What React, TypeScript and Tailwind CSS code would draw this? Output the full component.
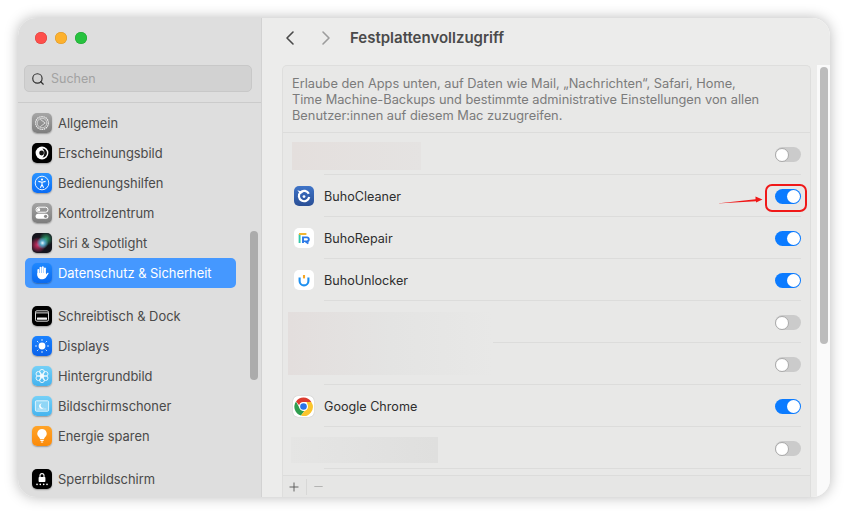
import React from 'react';
import { ChevronLeft, ChevronRight, Search, Plus, Minus } from 'lucide-react';

const Tile: React.FC<{ className: string; children?: React.ReactNode }> = ({ className, children }) => (
  <div className={`h-5 w-5 shrink-0 rounded-[5px] flex items-center justify-center shadow-[0_1px_1.5px_rgba(0,0,0,0.3)] ${className}`}>
    {children}
  </div>
);

const icons: { [key: string]: React.ReactNode } = {
  general: (
    <Tile className="bg-gradient-to-b from-[#a6a6a6] to-[#7e7e7e]">
      <svg viewBox="0 0 20 20" className="h-5 w-5" fill="none" stroke="#e8e8e8">
        <circle cx="10" cy="10" r="6.4" strokeWidth="1.2" strokeDasharray="1.6 0.6" />
        <circle cx="10" cy="10" r="4.8" strokeWidth="0.7" />
        <path d="M8.2 6.3 13.2 10l-5 3.7" strokeWidth="0.8" />
      </svg>
    </Tile>
  ),
  appearance: (
    <Tile className="bg-black">
      <svg viewBox="0 0 20 20" className="h-5 w-5">
        <circle cx="10" cy="10" r="6.4" fill="#fff" />
        <path d="M10.4 5.4a4.6 4.6 0 0 1 0 9.2 6.4 6.4 0 0 0 0-9.2z" fill="#111" />
        <circle cx="9.6" cy="10" r="2.4" fill="#111" />
      </svg>
    </Tile>
  ),
  access: (
    <Tile className="bg-gradient-to-b from-[#2a93ff] to-[#0a6cf5]">
      <svg viewBox="0 0 20 20" className="h-5 w-5" fill="none" stroke="#fff">
        <circle cx="10" cy="10" r="6.8" strokeWidth="0.9" />
        <circle cx="10" cy="6.6" r="1.1" fill="#fff" stroke="none" />
        <path d="M6.4 8.4 10 9.2l3.6-.8M10 9.2v2.4l-1.6 3.2M10 11.6l1.6 3.2" strokeWidth="1.1" />
      </svg>
    </Tile>
  ),
  control: (
    <Tile className="bg-gradient-to-b from-[#a4a4a4] to-[#7d7d7d]">
      <svg viewBox="0 0 20 20" className="h-5 w-5">
        <rect x="4" y="4.2" width="12" height="5" rx="2.5" fill="none" stroke="#fff" strokeWidth="1" />
        <circle cx="6.6" cy="6.7" r="1.6" fill="#fff" />
        <rect x="3.6" y="10.8" width="12.8" height="5" rx="2.5" fill="#fff" />
        <circle cx="13.6" cy="13.3" r="1.6" fill="#8a8a8a" />
      </svg>
    </Tile>
  ),
  siri: (
    <Tile className="bg-[#14141c]">
      <svg viewBox="0 0 20 20" className="h-5 w-5 rounded-[5px]">
        <defs>
          <radialGradient id="s1"><stop offset="0" stopColor="#e9f7ff" /><stop offset="0.4" stopColor="#55a8c8" /><stop offset="1" stopColor="#55a8c8" stopOpacity="0" /></radialGradient>
          <radialGradient id="s2"><stop offset="0" stopColor="#e0306a" /><stop offset="1" stopColor="#e0306a" stopOpacity="0" /></radialGradient>
          <radialGradient id="s3"><stop offset="0" stopColor="#2ea56e" /><stop offset="1" stopColor="#2ea56e" stopOpacity="0" /></radialGradient>
        </defs>
        <circle cx="6" cy="12" r="8" fill="url(#s2)" />
        <circle cx="14" cy="6" r="7" fill="url(#s3)" />
        <circle cx="10.5" cy="10" r="6" fill="url(#s1)" />
      </svg>
    </Tile>
  ),
  privacy: (
    <Tile className="bg-gradient-to-b from-[#1e88ff] to-[#0a6af0]">
      <svg viewBox="0 0 20 20" className="h-5 w-5" fill="#fff">
        <rect x="5.4" y="6" width="1.9" height="7" rx="0.95" />
        <rect x="7.6" y="3.8" width="1.9" height="8" rx="0.95" />
        <rect x="9.8" y="3.2" width="1.9" height="8" rx="0.95" />
        <rect x="12" y="4.4" width="1.9" height="8" rx="0.95" />
        <path d="M5.4 10h8.5v1.6l1.4-1.7c.7-.7 1.6.1 1.1.9l-2.1 3.3c-.8 1.3-1.9 2.2-3.6 2.2-3 0-5.3-1.4-5.3-4.4z" />
      </svg>
    </Tile>
  ),
  dock: (
    <Tile className="bg-black">
      <svg viewBox="0 0 20 20" className="h-5 w-5">
        <rect x="3.5" y="4.8" width="13" height="10.4" rx="1.4" fill="none" stroke="#d8d8d8" strokeWidth="1" />
        <rect x="4" y="6" width="12" height="1.6" fill="#888" />
        <rect x="5" y="11.4" width="10" height="2.4" rx="0.5" fill="#f2f2f2" />
      </svg>
    </Tile>
  ),
  displays: (
    <Tile className="bg-gradient-to-b from-[#1b82ff] to-[#0b62ea]">
      <svg viewBox="0 0 20 20" className="h-5 w-5" fill="none" stroke="#fff">
        <circle cx="10" cy="10" r="3.4" fill="#fff" stroke="none" />
        <path d="M10 3.2v1.6M10 15.2v1.6M3.2 10h1.6M15.2 10h1.6M5.2 5.2l1.1 1.1M13.7 13.7l1.1 1.1M14.8 5.2l-1.1 1.1M6.3 13.7l-1.1 1.1" strokeWidth="1" />
      </svg>
    </Tile>
  ),
  wallpaper: (
    <Tile className="bg-gradient-to-b from-[#75d0f7] to-[#43b2ee]">
      <svg viewBox="0 0 20 20" className="h-5 w-5" fill="none" stroke="#fff" strokeWidth="0.9" opacity="0.95">
        <circle cx="10" cy="5.8" r="2.4" />
        <circle cx="10" cy="14.2" r="2.4" />
        <circle cx="6.4" cy="7.9" r="2.4" />
        <circle cx="13.6" cy="7.9" r="2.4" />
        <circle cx="6.4" cy="12.1" r="2.4" />
        <circle cx="13.6" cy="12.1" r="2.4" />
        <circle cx="10" cy="10" r="1.6" fill="#fff" />
      </svg>
    </Tile>
  ),
  saver: (
    <Tile className="bg-gradient-to-b from-[#75d0f7] to-[#45b4ef]">
      <svg viewBox="0 0 20 20" className="h-5 w-5">
        <rect x="3.4" y="4.8" width="13.2" height="10.4" rx="1" fill="#8fd6f6" stroke="#e9f8ff" strokeWidth="0.9" />
        <path d="M9.8 7.6a2.6 2.6 0 1 0 2 4 2.2 2.2 0 0 1-2-4z" fill="#fff" />
        <path d="M5.6 13h8.8" stroke="#fff" strokeWidth="0.7" opacity="0.7" />
      </svg>
    </Tile>
  ),
  energy: (
    <Tile className="bg-gradient-to-b from-[#ffa428] to-[#fb8a06]">
      <svg viewBox="0 0 20 20" className="h-5 w-5" fill="#fff">
        <path d="M10 3a4.7 4.7 0 0 0-3 8.3c.7.6.9 1.2 1 2h4c.1-.8.3-1.4 1-2A4.7 4.7 0 0 0 10 3z" />
        <rect x="8.2" y="14" width="3.6" height="1.1" rx="0.5" />
        <rect x="8.8" y="15.6" width="2.4" height="1" rx="0.5" />
      </svg>
    </Tile>
  ),
  lock: (
    <Tile className="bg-black">
      <svg viewBox="0 0 20 20" className="h-5 w-5" fill="#fff">
        <path d="M8 8V6.6a2 2 0 0 1 4 0V8" fill="none" stroke="#fff" strokeWidth="1.1" />
        <rect x="6.6" y="8" width="6.8" height="5" rx="0.8" />
        <circle cx="5" cy="15.4" r="0.8" />
        <circle cx="8.3" cy="15.4" r="0.8" />
        <circle cx="11.7" cy="15.4" r="0.8" />
        <circle cx="15" cy="15.4" r="0.8" />
      </svg>
    </Tile>
  ),
};

const Item: React.FC<{ icon: string; label: string; active?: boolean; mt?: string }> = ({ icon, label, active, mt }) => (
  <div className={`mr-[25px] flex h-[30px] items-center gap-[6px] rounded-[5px] pl-[7px] text-[12.9px] ${active ? 'bg-[#4598ff] text-white' : 'text-[#4a4a4a]'} ${mt || ''}`}>
    {icons[icon]}
    <span className="pt-[2px]">{label}</span>
  </div>
);

const Toggle: React.FC<{ on?: boolean }> = ({ on }) =>
  on ? (
    <div className="flex h-[15px] w-[26px] shrink-0 items-center justify-end rounded-full bg-[#0b7bff] pr-px">
      <div className="h-[13px] w-[13px] rounded-full bg-white" />
    </div>
  ) : (
    <div className="flex h-[15px] w-[26px] shrink-0 items-center rounded-full bg-[#cbcbcb]">
      <div className="h-[14px] w-[14px] rounded-full border border-[#a9a9a9] bg-white" />
    </div>
  );

const BuhoCleaner = () => (
  <div className="h-5 w-5 rounded-[5px] bg-gradient-to-b from-[#3f74c8] to-[#2a4f96]">
    <svg viewBox="0 0 20 20" className="h-5 w-5" fill="none">
      <path d="M14.8 7.8A5.2 5.2 0 1 0 15.2 11" stroke="#fff" strokeWidth="2.2" />
      <path d="M3.4 4.2 9.4 6 6.4 8.2z" fill="#fff" />
      <circle cx="10" cy="10.6" r="1.4" fill="#fff" />
    </svg>
  </div>
);

const BuhoRepair = () => (
  <div className="h-5 w-5 rounded-[5px] bg-white">
    <svg viewBox="0 0 20 20" className="h-5 w-5" fill="none" strokeWidth="1.9">
      <path d="M5.6 15V6" stroke="#2ec6a8" />
      <path d="M5 6h7.4" stroke="#f2b632" />
      <path d="M9 15V9.4h3.6a2 2 0 0 1 .4 4h-1.6l3 2.2" stroke="#2a78e8" />
    </svg>
  </div>
);

const BuhoUnlocker = () => (
  <div className="h-5 w-5 rounded-[5px] bg-white">
    <svg viewBox="0 0 20 20" className="h-5 w-5" fill="none" strokeWidth="2.1">
      <path d="M5.6 7.5V11a4.4 4.4 0 0 0 8.8 0V7.5" stroke="#1e90f0" />
      <path d="M10 5v3.4" stroke="#f5a623" />
    </svg>
  </div>
);

const Chrome = () => (
  <div className="h-[21px] w-[21px] rounded-[5px] bg-white shadow-[0_0_1px_rgba(0,0,0,0.3)]">
    <svg viewBox="0 0 21 21" className="h-[21px] w-[21px]">
      <path d="M10.5 1.5a9 9 0 0 1 7.8 4.5h-7.8a4.5 4.5 0 0 0-4.3 3.2L3 5.6A9 9 0 0 1 10.5 1.5z" fill="#dc3b2e" />
      <path d="M3 5.6l3.8 6.9a4.5 4.5 0 0 0 4.6 2.4L8 19.5A9 9 0 0 1 3 5.6z" fill="#2f9e4f" />
      <path d="M18.3 6A9 9 0 0 1 8 19.5l3.4-4.6a4.5 4.5 0 0 0 3-6.4 4 4 0 0 0-1-2.5z" fill="#fbc52e" />
      <circle cx="10.5" cy="10.5" r="4.3" fill="#fff" />
      <circle cx="10.5" cy="10.5" r="3.3" fill="#2a73e8" />
    </svg>
  </div>
);

const AppRow: React.FC<{ icon: React.ReactNode; name: string }> = ({ icon, name }) => (
  <div className="flex h-[42px] items-center pr-[9px]">
    <div className="flex w-[41px] shrink-0 justify-center">{icon}</div>
    <div className="flex h-full flex-1 items-center justify-between border-b border-[#dcdcdb] pt-px text-[12.6px] text-[#2e2e2e]">
      <span className="pt-[2px]">{name}</span>
      <Toggle on />
    </div>
  </div>
);

const BlurRow: React.FC<{ blob?: React.ReactNode; line?: string }> = ({ blob, line }) => (
  <div className="relative flex h-[42px] items-center pr-[9px]">
    <div className={`flex h-full flex-1 items-center justify-end border-b border-[#dcdcdb] pt-[2px] ${line || 'ml-[41px]'}`}>
      <Toggle />
    </div>
    {blob}
  </div>
);

export default function App() {
  return (
    <div className="h-[515px] w-[848px] bg-white p-[18px]" style={{ fontFamily: 'Inter, "Liberation Sans", sans-serif' }}>
      <div className="relative flex h-[479px] w-[812px] overflow-hidden rounded-[18px] shadow-[0_0_14px_rgba(0,0,0,0.28)]">
        {/* Sidebar */}
        <div className="flex w-[244px] shrink-0 flex-col border-r border-[#d2d2d2] bg-[#dedede]">
          <div className="flex h-[47px] items-center gap-[8px] pb-[7px] pl-[17px]">
            <div className="h-3 w-3 rounded-full bg-[#fe4f4b] shadow-[inset_0_0_0_0.5px_#d8403c]" />
            <div className="h-3 w-3 rounded-full bg-[#fdb12d] shadow-[inset_0_0_0_0.5px_#d8962a]" />
            <div className="h-3 w-3 rounded-full bg-[#27c23f] shadow-[inset_0_0_0_0.5px_#1fa232]" />
          </div>
          <div className="ml-[6px] mr-[9px] flex h-[27px] items-center gap-[6px] rounded-[5px] border border-[#c8c8c8] bg-[#d2d2d2] pl-[6px] pt-px text-[12.5px] text-[#a2a2a2]">
            <Search className="h-[14px] w-[14px] text-[#303030]" strokeWidth={2} />
            <span>Suchen</span>
          </div>
          <div className="mt-[10px] border-t border-[#cbcbcb]" />
          <div className="relative flex-1 overflow-hidden pl-[7px] pt-[5px]">
            <Item icon="general" label="Allgemein" />
            <Item icon="appearance" label="Erscheinungsbild" />
            <Item icon="access" label="Bedienungshilfen" />
            <Item icon="control" label="Kontrollzentrum" />
            <Item icon="siri" label="Siri & Spotlight" />
            <Item icon="privacy" label="Datenschutz & Sicherheit" active />
            <Item icon="dock" label="Schreibtisch & Dock" mt="mt-[13px]" />
            <Item icon="displays" label="Displays" />
            <Item icon="wallpaper" label="Hintergrundbild" />
            <Item icon="saver" label="Bildschirmschoner" />
            <Item icon="energy" label="Energie sparen" />
            <Item icon="lock" label="Sperrbildschirm" mt="mt-[13px]" />
            {/* Scroll thumb */}
            <div className="absolute left-[232px] top-[128px] h-[149px] w-[8px] rounded-full bg-[#acacac]" />
          </div>
        </div>

        {/* Main */}
        <div className="flex min-w-0 flex-1 flex-col bg-[#ececeb]">
          <div className="flex h-[47px] shrink-0 items-center pb-[7px] pl-[16px]">
            <ChevronLeft className="h-6 w-6 text-[#4a4a4a]" strokeWidth={1.6} />
            <ChevronRight className="ml-[12px] h-6 w-6 text-[#9c9c9c]" strokeWidth={1.6} />
            <span className="ml-[12px] pt-px text-[15px] font-semibold text-[#4a4a4a]">Festplattenvollzugriff</span>
          </div>
          <div className="flex min-h-0 flex-1">
            <div className="ml-[20px] flex w-[529px] flex-col rounded-t-[5px] border-l border-r border-t border-[#dededd] bg-[#e8e8e7]">
              <div className="h-[67px] shrink-0 border-b border-[#dcdcdb] px-[9px] pt-[10px] text-[12.8px] leading-[16px] text-[#7b7b7b]">
                Erlaube den Apps unten, auf Daten wie Mail, „Nachrichten“, Safari, Home,
                <br />
                Time Machine-Backups und bestimmte administrative Einstellungen von allen
                <br />
                Benutzer:innen auf diesem Mac zuzugreifen.
              </div>
              <div className="min-h-0 flex-1 overflow-hidden">
                <BlurRow blob={<div className="absolute left-[9px] top-[9px] h-[28px] w-[129px] bg-gradient-to-r from-[#e4dfdd] to-[#e5e3e2]" />} />
                <AppRow icon={<BuhoCleaner />} name="BuhoCleaner" />
                <AppRow icon={<BuhoRepair />} name="BuhoRepair" />
                <AppRow icon={<BuhoUnlocker />} name="BuhoUnlocker" />
                <BlurRow
                  line="ml-[210px]"
                  blob={<div className="absolute left-[5px] top-[11px] h-[63px] w-[205px] bg-gradient-to-r from-[#e3dedd] via-[#e4e4e3] to-[#e8e8e7]" />}
                />
                <BlurRow />
                <AppRow icon={<Chrome />} name="Google Chrome" />
                <BlurRow blob={<div className="absolute left-[8px] top-[10px] h-[26px] w-[147px] bg-gradient-to-r from-[#e5e5e4] to-[#dfdfde]" />} />
              </div>
              <div className="flex h-[22px] shrink-0 items-center border-t border-[#dcdcdb] bg-[#e6e6e5] pl-[4px]">
                <Plus className="h-[14px] w-[14px] text-[#505050]" strokeWidth={1.5} />
                <div className="ml-[5px] h-[16px] border-l border-[#d8d8d7]" />
                <Minus className="ml-[5px] h-[13px] w-[13px] text-[#a8a8a8]" strokeWidth={1.5} />
              </div>
            </div>
            {/* Scroll track */}
            <div className="ml-[6px] w-[13px] bg-[#fafafa] pl-[3px] pt-[2px]">
              <div className="h-[277px] w-[8px] rounded-full bg-[#bcbcbc]" />
            </div>
          </div>
        </div>

        {/* Annotation */}
        <div className="absolute left-[747px] top-[166px] h-[28px] w-[42px] rounded-[7px] border-2 border-[#f01818]" />
        <svg className="absolute left-[697px] top-[176px]" width="50" height="12" viewBox="0 0 50 12">
          <path d="M2 9.6 40.5 5.2 40.5 2.6 47.5 5.6 41 8.6 41 7.2z" fill="#f01818" />
        </svg>
      </div>
    </div>
  );
}
